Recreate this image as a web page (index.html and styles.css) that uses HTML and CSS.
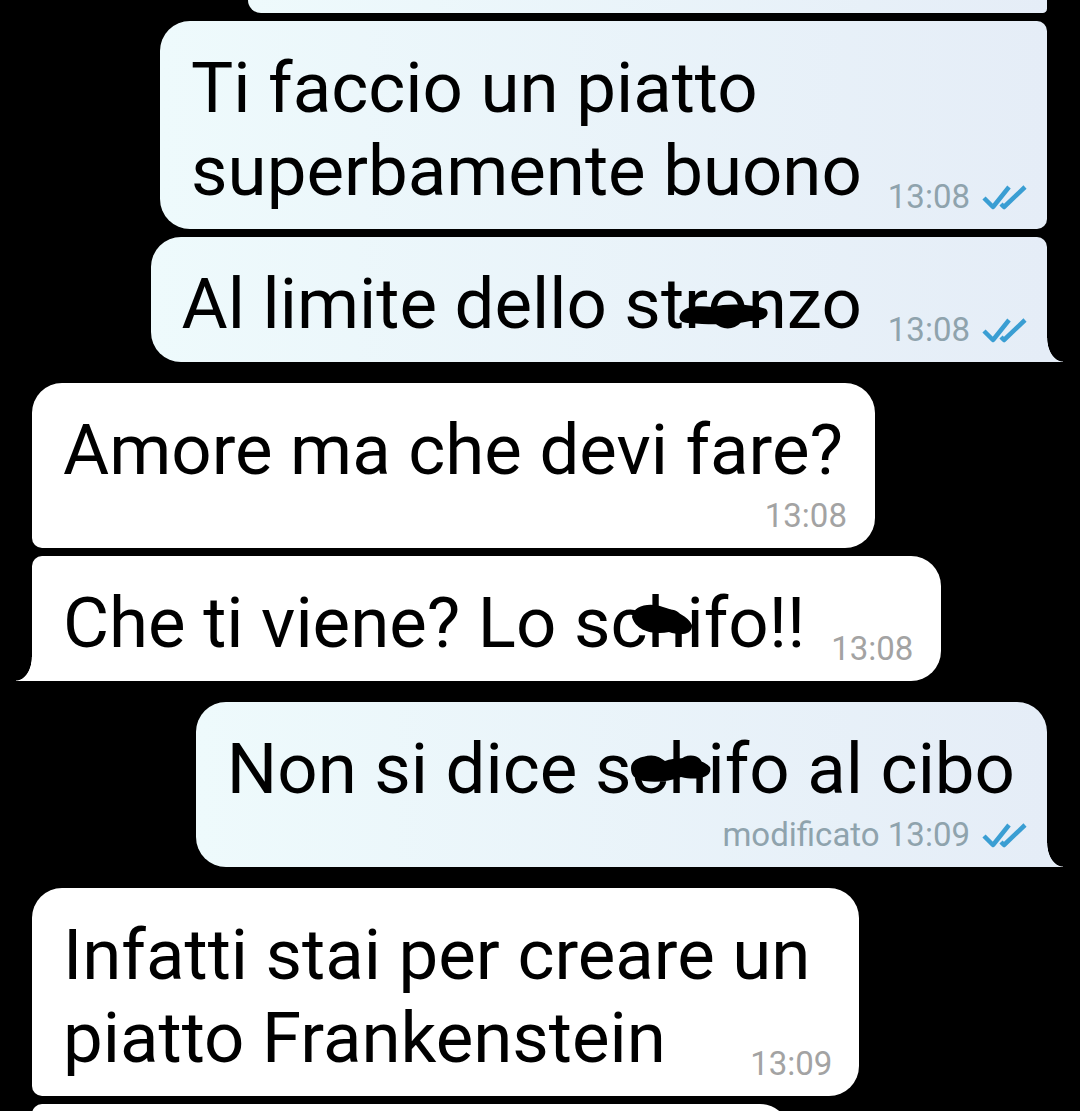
FILE: index.html
```html
<!DOCTYPE html>
<html lang="it">
<head>
    <meta charset="UTF-8">
    <meta name="viewport" content="width=device-width, initial-scale=1.0">
    <title>Chat</title>
    <link rel="stylesheet" href="styles.css">
</head>
<body>
    <div class="chat">
        <div class="group out-group">
            <div class="bubble out cut"></div>
            <div class="bubble out cont-top cont-bottom row">
                <div class="text">Ti faccio un piatto<br>superbamente buono</div>
                <div class="meta"><span class="time">13:08</span><svg class="ticks" viewBox="0 0 46 26"><path d="M2 14 L11 23 L27 3"/><path d="M19 20 L22 23 L43 3"/></svg></div>
            </div>
            <div class="bubble out cont-top tail row">
                <div class="text">Al limite dello st<span class="scribble">ro<svg class="blob blob-1" viewBox="0 0 92 24"><path d="M2 13 C5 4 20 3 34 5 C50 1 74 2 88 7 C93 13 86 20 72 19 C56 23 30 23 12 21 C4 21 0 18 2 13 Z"/></svg></span>nzo</div>
                <div class="meta"><span class="time">13:08</span><svg class="ticks" viewBox="0 0 46 26"><path d="M2 14 L11 23 L27 3"/><path d="M19 20 L22 23 L43 3"/></svg></div>
            </div>
        </div>

        <div class="group in-group">
            <div class="bubble in cont-bottom stack">
                <div class="text">Amore ma che devi fare?</div>
                <div class="meta"><span class="time">13:08</span></div>
            </div>
            <div class="bubble in cont-top tail row">
                <div class="text">Che ti viene? Lo s<span class="scribble">ch<svg class="blob blob-2" viewBox="0 0 64 34"><path d="M2 14 C3 2 20 -1 33 4 C46 8 58 13 62 22 C63 32 50 33 39 29 C26 32 6 29 2 14 Z"/></svg></span>ifo!!</div>
                <div class="meta"><span class="time">13:08</span></div>
            </div>
        </div>

        <div class="group out-group">
            <div class="bubble out tail stack">
                <div class="text">Non si dice s<span class="scribble">ch<svg class="blob blob-3" viewBox="0 0 82 30"><path d="M1 15 C1 2 26 0 35 8 C48 3 72 5 80 14 C83 24 68 28 51 24 C40 28 28 30 14 28 C4 26 1 22 1 15 Z"/></svg></span>ifo al cibo</div>
                <div class="meta"><span class="time">modificato 13:09</span><svg class="ticks" viewBox="0 0 46 26"><path d="M2 14 L11 23 L27 3"/><path d="M19 20 L22 23 L43 3"/></svg></div>
            </div>
        </div>

        <div class="group in-group">
            <div class="bubble in cont-bottom stack overlap">
                <div class="text">Infatti stai per creare un<br>piatto Frankenstein</div>
                <div class="meta"><span class="time">13:09</span></div>
            </div>
            <div class="bubble in cont-top cut-bottom"></div>
        </div>
    </div>
</body>
</html>
```

FILE: styles.css
```css
html, body {
    margin: 0;
    padding: 0;
    height: 1111px;
    overflow: hidden;
    background-color: #000;
}
body {
    font-family: Roboto, "Noto Sans", sans-serif;
    color: #000;
}
.chat {
    display: flex;
    flex-direction: column;
    gap: 21px;
    padding: 0 33px 0 32px;
}
.group {
    display: flex;
    flex-direction: column;
    gap: 8px;
}
.out-group {
    align-items: flex-end;
}
.in-group {
    align-items: flex-start;
}

/* bubbles */
.bubble {
    position: relative;
    padding: 25px 32px 17px 31px;
    border-radius: 30px;
}
.bubble.out {
    background: linear-gradient(90deg, #eefafc, #e5edf7);
}
.bubble.in {
    background: #fff;
}
.bubble.out.cont-top { border-top-right-radius: 10px; }
.bubble.out.cont-bottom { border-bottom-right-radius: 10px; }
.bubble.in.cont-top { border-top-left-radius: 10px; }
.bubble.in.cont-bottom { border-bottom-left-radius: 10px; }
.bubble.out.tail { border-bottom-right-radius: 0; }
.bubble.in.tail { border-bottom-left-radius: 0; }

.bubble.out.tail::after,
.bubble.in.tail::after {
    content: "";
    position: absolute;
    bottom: 0;
    width: 16px;
    height: 24px;
}
.bubble.out.tail::after {
    right: -16px;
    background: radial-gradient(ellipse 16px 24px at 100% 0, transparent 96%, #e5edf7 100%);
}
.bubble.in.tail::after {
    left: -16px;
    background: radial-gradient(ellipse 16px 24px at 0 0, transparent 96%, #fff 100%);
}

.bubble.cut {
    width: 799px;
    height: 13px;
    padding: 0;
    border-radius: 0 0 10px 30px;
}
.bubble.cut-bottom {
    width: 758px;
    height: 60px;
    padding: 0;
}

.row {
    display: flex;
    align-items: flex-end;
}
.stack {
    display: flex;
    flex-direction: column;
    padding-bottom: 12px;
}
.stack.overlap {
    padding-right: 49px;
}

.text {
    font-size: 70.8px;
    line-height: 83px;
    white-space: nowrap;
}

/* time + ticks */
.meta {
    display: flex;
    align-items: center;
    gap: 12px;
    font-size: 33px;
    line-height: 40px;
    white-space: nowrap;
}
.row .meta {
    margin-left: 26px;
    margin-bottom: -5px;
}
.stack .meta {
    align-self: flex-end;
    margin-top: 5px;
}
.out .meta {
    color: #8fa3ad;
    margin-right: -13px;
}
.in .meta {
    color: #a3a3a3;
    margin-right: -4px;
}
.stack.overlap .meta {
    margin-top: -35px;
    margin-right: -22px;
}
.ticks {
    width: 46px;
    height: 26px;
    fill: none;
    stroke: #3a9ed3;
    stroke-width: 4.5;
    stroke-linejoin: round;
}

/* hand drawn scribbles */
.scribble {
    position: relative;
}
.blob {
    position: absolute;
    fill: #000;
    filter: blur(0.6px);
}
.blob-1 {
    left: -6px;
    top: 40px;
    width: 92px;
    height: 24px;
}
.blob-2 {
    left: 20px;
    top: 22px;
    width: 64px;
    height: 34px;
}
.blob-3 {
    left: -1px;
    top: 26px;
    width: 82px;
    height: 30px;
}
```
